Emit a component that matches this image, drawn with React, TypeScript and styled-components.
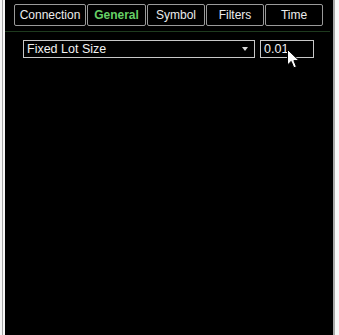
import React from 'react';
import styled, { createGlobalStyle } from 'styled-components';

const GlobalStyle = createGlobalStyle`
  html, body {
    margin: 0;
    padding: 0;
    background: #f7f7f7;
    font-family: "Liberation Sans", Arial, sans-serif;
  }
`;

const tabs = ['Connection', 'General', 'Symbol', 'Filters', 'Time'];
const tabWidths = [72, 59, 58, 58, 58];

export default function App() {
  return (
    <>
      <GlobalStyle />
      <Frame>
        <Window>
          <Content>
            <TabBar>
              {tabs.map((t, i) => (
                <Tab key={t} $active={t === 'General'} $w={tabWidths[i]}>
                  {t}
                </Tab>
              ))}
            </TabBar>
            <Divider />
            <Row>
              <Select>
                <span>Fixed Lot Size</span>
                <Arrow />
              </Select>
              <Input>0.01</Input>
            </Row>
            <Cursor viewBox="0 0 13 20" width="13" height="20">
              <path
                d="M0.5 0.5 L0.5 16 L4.2 12.4 L6.8 18.8 L9.4 17.7 L6.9 11.6 L12 11.6 Z"
                fill="#fff"
                stroke="#000"
                strokeWidth="1"
                strokeLinejoin="round"
              />
            </Cursor>
          </Content>
        </Window>
      </Frame>
    </>
  );
}

const Frame = styled.div`
  height: 335px;
  padding: 0 4px 0 2px;
  box-sizing: border-box;
  background: #f7f7f7;
`;
const Window = styled.div`
  height: 100%;
  border-left: 1px solid #a8a8a8;
  border-right: 2px solid #a8a8a8;
  padding-left: 2px;
  background: #f7f7f7;
  box-sizing: border-box;
`;
const Content = styled.div`
  position: relative;
  height: 100%;
  background: #000;
  padding-top: 4px;
  box-sizing: border-box;
`;
const TabBar = styled.div`
  display: flex;
  gap: 1px;
  padding-left: 9px;
`;
const Tab = styled.div<{ $active: boolean; $w: number }>`
  width: ${(p) => p.$w}px;
  height: 22px;
  box-sizing: border-box;
  border: 1px solid #9a9a9a;
  border-radius: 2px;
  display: flex;
  align-items: center;
  justify-content: center;
  font-size: 12px;
  color: ${(p) => (p.$active ? '#66d066' : '#ececec')};
  font-weight: ${(p) => (p.$active ? 'bold' : 'normal')};
`;
const Divider = styled.div`
  height: 1px;
  background: #1e3a1e;
  margin: 5px 3px 0 0;
`;
const Row = styled.div`
  display: flex;
  gap: 5px;
  padding: 8px 0 0 18px;
`;
const Select = styled.div`
  width: 232px;
  height: 18px;
  box-sizing: border-box;
  border: 1px solid #c8c8c8;
  display: flex;
  align-items: center;
  justify-content: space-between;
  padding: 0 6px 0 3px;
  color: #f2f2f2;
  font-size: 12.5px;
`;
const Arrow = styled.span`
  width: 0;
  height: 0;
  border-left: 3px solid transparent;
  border-right: 3px solid transparent;
  border-top: 4px solid #d8d8d8;
`;
const Input = styled.div`
  width: 54px;
  height: 18px;
  box-sizing: border-box;
  border: 1px solid #c8c8c8;
  display: flex;
  align-items: center;
  padding-left: 3px;
  color: #f2f2f2;
  font-size: 12.5px;
`;
const Cursor = styled.svg`
  position: absolute;
  left: 282px;
  top: 49px;
`;
